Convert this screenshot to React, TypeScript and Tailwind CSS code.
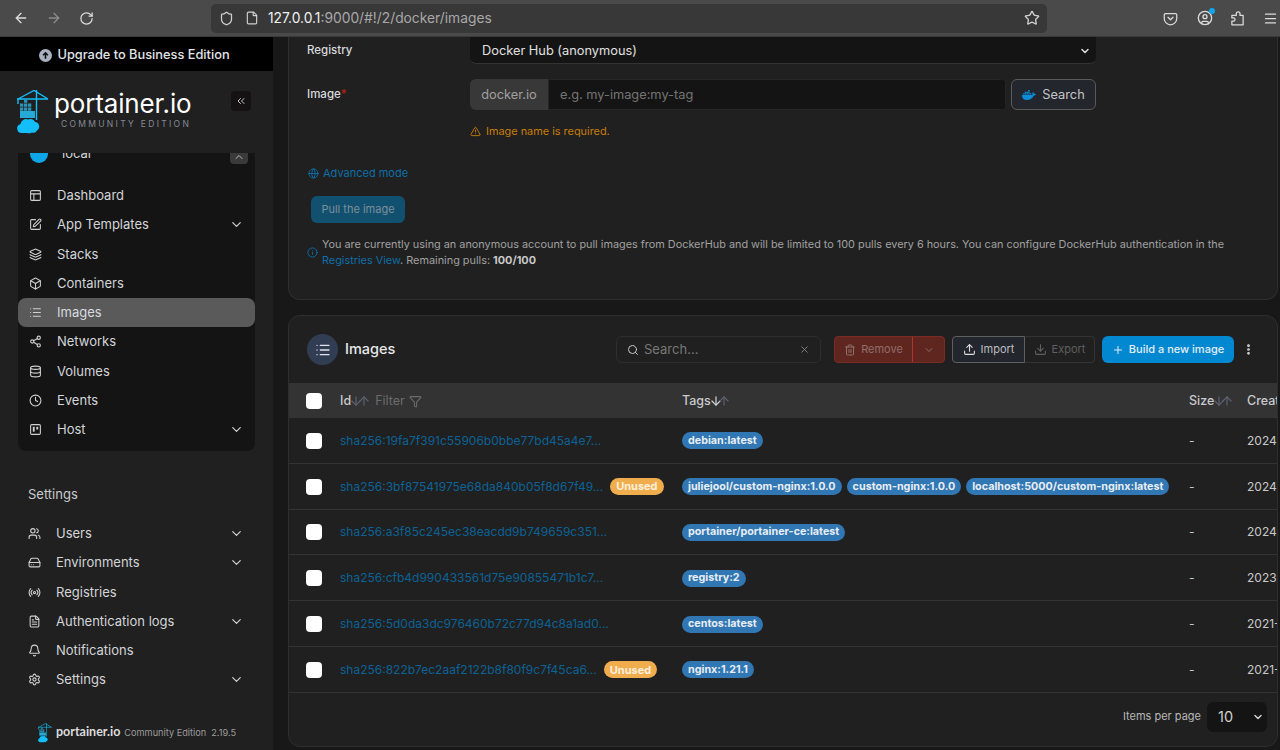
import {
  ArrowDown,
  ArrowLeft,
  ArrowRight,
  ArrowUp,
  Bell,
  Box,
  ChevronDown,
  ChevronUp,
  ChevronsLeft,
  CircleUser,
  Clock,
  Database,
  Download,
  EllipsisVertical,
  File,
  FileText,
  Filter,
  Globe,
  HardDrive,
  Info,
  Layers,
  Layout,
  List,
  Menu,
  Plus,
  Radio,
  RotateCw,
  Search,
  Settings,
  Share2,
  Shield,
  SquarePen,
  Star,
  Trash2,
  TriangleAlert,
  Upload,
  Users,
  X,
} from "lucide-react"
import { FaDocker } from "react-icons/fa"
import type { ComponentType, ReactNode } from "react"

type IconType = ComponentType<{ className?: string; strokeWidth?: number }>

const HostIcon = ({ className }: { className?: string }) => (
  <svg viewBox="0 0 24 24" className={className} fill="none" stroke="currentColor" strokeWidth={2}>
    <rect x="3" y="3" width="18" height="18" rx="2" />
    <rect x="7" y="7" width="3.5" height="9" fill="currentColor" stroke="none" />
    <rect x="13.5" y="7" width="3.5" height="5" fill="currentColor" stroke="none" />
  </svg>
)

const PocketIcon = ({ className }: { className?: string }) => (
  <svg viewBox="0 0 24 24" className={className} fill="none" stroke="currentColor" strokeWidth={2} strokeLinecap="round" strokeLinejoin="round">
    <path d="M4 4h16a2 2 0 0 1 2 2v6a10 10 0 0 1-20 0V6a2 2 0 0 1 2-2z" />
    <path d="m8 10 4 4 4-4" />
  </svg>
)

const ExtensionIcon = ({ className }: { className?: string }) => (
  <svg viewBox="0 0 24 24" className={className} fill="none" stroke="currentColor" strokeWidth={2} strokeLinejoin="round">
    <path d="M3 22v-6h2.500a2.500 2.500 0 0 0 0-5H3V7h7V4.500a3 3 0 0 1 6 0V7h5v15z" />
  </svg>
)

const CraneLogo = ({ className }: { className?: string }) => (
  <svg viewBox="0 0 32 44" className={className} fill="none">
    <path d="M0 9H31M17 0.500L1 9M17 0.500L31 9M1 9V14M19.500 0V30" stroke="#13BEF9" strokeWidth="1.400" />
    <path d="M3 13.500h3.300v3.300H3zM7 13.500h3.300v3.300H7zM11 13.500h3.300v3.300H11zM7 9.500h3.300v3.300H7zM3 17.500h3.300v3.300H3zM7 17.500h3.300v3.300H7zM11 17.500h3.300v3.300H11z" fill="#2a93b8" />
    <rect x="3" y="21" width="15" height="7" fill="#25a9d6" />
    <path d="M5 43a4.600 4.600 0 0 1-1.500-9A5.500 5.500 0 0 1 11 29.500a5 5 0 0 1 7 2.500a4.600 4.600 0 0 1 2 8.500a4 4 0 0 1-5 2a6 6 0 0 1-5 .5z" fill="#13BEF9" />
  </svg>
)

const NavRow = ({
  icon: Icon,
  label,
  chevron,
  active,
  pad = "pl-[11px] pr-[11px]",
}: {
  icon: IconType | typeof HostIcon
  label: string
  chevron?: boolean
  active?: boolean
  pad?: string
}) => (
  <div
    className={`flex h-[29.25px] items-center gap-[15px] rounded-lg ${pad} text-[13px] ${
      active ? "bg-[#5a5a5a] text-[#d8dadf]" : "text-[#d3d5d9]"
    }`}
  >
    <Icon className="size-[13px] shrink-0 text-[#d0d0d0]" />
    <span className="flex-1 leading-none">{label}</span>
    {chevron && <ChevronDown className="size-[15px] text-[#cfcfcf]" />}
  </div>
)

const Tag = ({ children }: { children: ReactNode }) => (
  <span className="flex h-[17px] items-center whitespace-nowrap rounded-full bg-[#3077b4] px-[6px] text-[10.75px] font-bold text-[#e8edf3]">
    {children}
  </span>
)

const Sort = ({ active }: { active?: boolean }) => (
  <span className="-ml-[2px] flex items-center">
    <ArrowDown className={`-mr-[6px] size-[14px] ${active ? "text-[#d5d7dc]" : "text-[#5c6270]"}`} />
    <ArrowUp className="size-[14px] text-[#5c6270]" />
  </span>
)

const rows = [
  { id: "sha256:19fa7f391c55906b0bbe77bd45a4e7...", tags: ["debian:latest"], year: "2024-" },
  {
    id: "sha256:3bf87541975e68da840b05f8d67f49...",
    unused: true,
    tags: ["juliejool/custom-nginx:1.0.0", "custom-nginx:1.0.0", "localhost:5000/custom-nginx:latest"],
    year: "2024-",
  },
  { id: "sha256:a3f85c245ec38eacdd9b749659c351...", tags: ["portainer/portainer-ce:latest"], year: "2024-" },
  { id: "sha256:cfb4d990433561d75e90855471b1c7...", tags: ["registry:2"], year: "2023-" },
  { id: "sha256:5d0da3dc976460b72c77d94c8a1ad0...", tags: ["centos:latest"], year: "2021-" },
  { id: "sha256:822b7ec2aaf2122b8f80f9c7f45ca6...", unused: true, tags: ["nginx:1.21.1"], year: "2021-" },
]

const cols = "grid grid-cols-[51px_342px_507px_58px_31px] items-center"

const Checkbox = () => (
  <input type="checkbox" className="ml-[17px] size-4 appearance-none rounded-[4px] bg-white" />
)

const BrowserBar = () => (
  <div className="flex h-[37px] shrink-0 items-center border-b border-[#3a3a3a] bg-[#4a4a4a] text-[#dcdcdc]">
    <div className="flex w-[211px] items-center pl-[13px]">
      <ArrowLeft className="size-[16px]" />
      <ArrowRight className="ml-[17px] size-[16px] text-[#8c8c8c]" />
      <RotateCw className="ml-[17px] size-[15px]" />
    </div>
    <div className="flex h-[29px] w-[836px] items-center rounded-[5px] bg-[#383838] pl-[8px] pr-[7px]">
      <Shield className="size-[15px] text-[#d0d0d0]" />
      <File className="ml-[11px] size-[14px] text-[#d0d0d0]" />
      <span className="ml-[9px] flex-1 pt-[1px] text-[13.8px] text-[#a8a8a8]">
        <span className="text-[#f0f0f0]">127.0.0.1</span>:9000/#!/2/docker/images
      </span>
      <Star className="size-[16px] text-[#d0d0d0]" />
    </div>
    <div className="ml-[116px] flex items-center">
      <PocketIcon className="size-[15px]" />
      <span className="relative ml-[19px]">
        <CircleUser className="size-[16px]" />
        <span className="absolute -right-[2px] -top-[2px] size-[6px] rounded-full bg-[#0ea5e9]" />
      </span>
      <ExtensionIcon className="ml-[17px] size-[15px]" />
      <Menu className="ml-[18px] size-[15px]" />
    </div>
  </div>
)

const Sidebar = () => (
  <aside className="flex w-[273px] shrink-0 flex-col overflow-hidden bg-[#202020]">
    <div className="flex h-[34px] shrink-0 items-center justify-center bg-black pr-[4px] pt-[2px] text-[12.8px] font-medium text-[#e2e4e8]">
      <svg viewBox="0 0 24 24" className="mr-[5px] size-[13px]">
        <circle cx="12" cy="12" r="12" fill="#a9b1c0" />
        <path d="M12 18V7M7.500 11.500 12 7l4.500 4.500" stroke="#111" strokeWidth="3" fill="none" />
      </svg>
      Upgrade to Business Edition
    </div>
    <div className="relative flex h-[82px] shrink-0 pl-[17px] pt-[19px]">
      <CraneLogo className="h-[44px] w-[32px]" />
      <div className="ml-[5px] -mt-[1px]">
        <div className="text-[26px] leading-[30px] tracking-[-0.15px] text-white">portainer.io</div>
        <div className="ml-[7px] whitespace-nowrap text-[8.500px] leading-[10px] tracking-[0.27em] text-[#848a96]">
          COMMUNITY EDITION
        </div>
      </div>
      <div className="absolute left-[231px] top-[20px] flex size-[20px] items-center justify-center rounded bg-[#141212]">
        <ChevronsLeft className="size-[12px] text-[#c8c8c8]" />
      </div>
    </div>
    <div className="mx-[18px] h-[298px] shrink-0 overflow-hidden rounded-b-lg bg-[#141414]">
      <div className="-mt-[9px] flex h-[20px] items-center pl-[12px] pr-[7px]">
        <span className="size-[18px] rounded-full bg-[#0ea5e9]" />
        <span className="ml-[14px] flex-1 text-[13px] text-[#d3d5d9]">local</span>
        <span className="flex h-[20px] w-[18px] items-center justify-center rounded bg-[#3a3a3a]">
          <ChevronUp className="mt-[6px] size-[12px] text-[#bbb]" />
        </span>
      </div>
      <div className="mt-[17px]">
        <NavRow icon={Layout} label="Dashboard" />
        <NavRow icon={SquarePen} label="App Templates" chevron />
        <NavRow icon={Layers} label="Stacks" />
        <NavRow icon={Box} label="Containers" />
        <NavRow icon={List} label="Images" active />
        <NavRow icon={Share2} label="Networks" />
        <NavRow icon={Database} label="Volumes" />
        <NavRow icon={Clock} label="Events" />
        <NavRow icon={HostIcon} label="Host" chevron />
      </div>
    </div>
    <div className="ml-[28px] mt-[34px] text-[13px] leading-[18px] text-[#c9cbcf]">Settings</div>
    <div className="mt-[16px] px-[18px]">
      <NavRow icon={Users} label="Users" chevron pad="pl-[10px] pr-[11px]" />
      <NavRow icon={HardDrive} label="Environments" chevron pad="pl-[10px] pr-[11px]" />
      <NavRow icon={Radio} label="Registries" pad="pl-[10px] pr-[11px]" />
      <NavRow icon={FileText} label="Authentication logs" chevron pad="pl-[10px] pr-[11px]" />
      <NavRow icon={Bell} label="Notifications" pad="pl-[10px] pr-[11px]" />
      <NavRow icon={Settings} label="Settings" chevron pad="pl-[10px] pr-[11px]" />
    </div>
    <div className="ml-[38px] mt-[28px] flex items-center">
      <CraneLogo className="h-[20px] w-[14px]" />
      <span className="ml-[4px] text-[12.500px] font-bold text-[#dcdcdc] [font-family:Lato,sans-serif]">portainer.io</span>
      <span className="ml-[4px] text-[9.200px] text-[#9c9c9c]">Community Edition</span>
      <span className="ml-[5px] text-[9.200px] text-[#9c9c9c]">2.19.5</span>
    </div>
  </aside>
)

const PullCard = () => (
  <section className="h-[263px] w-[990px] shrink-0 rounded-b-xl border-x border-b border-[#2e2e2e] bg-[#202020]">
    <div className="flex h-[27px] items-center pl-[18px]">
      <span className="w-[163px] text-[11.500px] font-medium text-[#d8dade]">Registry</span>
      <div className="flex h-[27px] w-[626px] items-center justify-between rounded-b-md border-b border-[#333] bg-[#141414] pl-[12px] pr-[5px] pt-[1px] text-[12.800px] text-[#e0e0e0]">
        Docker Hub (anonymous)
        <ChevronDown className="size-[12px] text-[#ddd]" strokeWidth={3} />
      </div>
    </div>
    <div className="mt-[15px] flex h-[31px] pl-[18px]">
      <span className="w-[163px] pt-[7px] text-[11.500px] font-medium text-[#d8dade]">
        Image<span className="text-[#b42318]">*</span>
      </span>
      <div className="flex h-[31px] w-[536px] overflow-hidden rounded-md">
        <span className="flex w-[78px] items-center justify-center bg-[#383838] text-[12.800px] text-[#a0a0a0]">docker.io</span>
        <input
          placeholder="e.g. my-image:my-tag"
          className="flex-1 border border-[#262626] bg-[#141414] pl-[11px] text-[12.800px] outline-none placeholder:text-[#747474]"
        />
      </div>
      <button className="ml-[5px] flex h-[31px] w-[85px] items-center justify-center gap-[6px] rounded-md border border-[#5a5a5a] bg-[#23262d] text-[12.800px] text-[#c4c4c4]">
        <FaDocker className="size-[14px] text-[#0a8ed9]" />
        Search
      </button>
    </div>
    <div className="ml-[181px] mt-[14px] flex h-[14px] items-center gap-[5px] text-[10.900px] text-[#c77d0a]">
      <TriangleAlert className="size-[11px]" />
      Image name is required.
    </div>
    <div className="ml-[19px] mt-[28px] flex h-[14px] items-center gap-[4px] text-[11px] text-[#0d6fa8]">
      <Globe className="size-[11px]" />
      Advanced mode
    </div>
    <button className="ml-[22px] mt-[16px] flex h-[27px] w-[94px] items-center justify-center rounded-md bg-[#11506f] text-[11px] text-[#7b8f9a]">
      Pull the image
    </button>
    <div className="ml-[18px] mt-[13px] flex items-center gap-[4px]">
      <Info className="size-[11px] shrink-0 text-[#0d6fa8]" />
      <p className="w-[930px] text-[10.870px] leading-[16px] text-[#a0a0a0]">
        You are currently using an anonymous account to pull images from DockerHub and will be limited to 100 pulls every 6 hours. You can configure DockerHub authentication in the{" "}
        <span className="text-[#0d6fa8]">Registries View</span>. Remaining pulls: <b className="text-[#c8c8c8]">100/100</b>
      </p>
    </div>
  </section>
)

const ImagesCard = () => (
  <section className="mt-[15px] h-[432px] w-[990px] shrink-0 overflow-hidden rounded-xl border border-[#2e2e2e] bg-[#202020]">
    <div className="flex h-[67px] items-center pl-[18px]">
      <span className="flex size-[31px] items-center justify-center rounded-full bg-[#303d52]">
        <List className="size-[16px] text-[#e0e4ea]" />
      </span>
      <span className="ml-[7px] w-[271px] pb-[2px] text-[14.500px] font-medium text-[#e6e7e9]">Images</span>
      <div className="flex h-[27px] w-[205px] items-center rounded-md border border-[#2e2e2e] pl-[10px] pr-[10px] text-[13px] text-[#777]">
        <Search className="size-[12px] text-[#c8c8c8]" />
        <span className="ml-[5px] flex-1">Search...</span>
        <X className="size-[11px] text-[#888]" />
      </div>
      <div className="ml-[13px] flex h-[27px] w-[111px] rounded-sm border border-[#7c2a24] bg-[#5f2620] text-[#8f6f6a]">
        <span className="flex w-[78px] items-center justify-center gap-[5px] border-r border-[#b3322a] text-[11px]">
          <Trash2 className="size-[12px]" />
          Remove
        </span>
        <span className="flex flex-1 items-center justify-center">
          <ChevronDown className="size-[12px]" />
        </span>
      </div>
      <div className="ml-[7px] flex h-[27px] text-[11px]">
        <span className="flex w-[73px] items-center justify-center gap-[5px] rounded-l-sm border border-[#5f5f5f] bg-[#23262d] text-[#bdbdbd]">
          <Upload className="size-[13px] text-[#ddd]" />
          Import
        </span>
        <span className="flex w-[70px] items-center justify-center gap-[5px] rounded-r-sm border-y border-r border-[#333] text-[#5f5f5f]">
          <Download className="size-[13px]" />
          Export
        </span>
      </div>
      <button className="ml-[7px] flex h-[27px] w-[132px] items-center justify-center gap-[5px] rounded-md bg-[#0288d1] text-[11px] font-medium text-[#e4eef5]">
        <Plus className="size-[12px]" />
        Build a new image
      </button>
      <EllipsisVertical className="ml-[8px] size-[13px] text-[#e0e0e0]" strokeWidth={3} />
    </div>
    <div className={`${cols} h-[35px] bg-[#333333] pt-[1px] text-[12.500px] font-medium text-[#c8c9cc]`}>
      <Checkbox />
      <div className="flex items-center">
        Id
        <Sort />
        <span className="ml-[4px] font-normal text-[#6b6b6b]">Filter</span>
        <Filter className="ml-[4px] size-[13px] text-[#6b6b6b]" />
      </div>
      <div className="flex items-center">
        Tags
        <Sort active />
      </div>
      <div className="flex items-center">
        Size
        <Sort />
      </div>
      <div className="overflow-hidden whitespace-nowrap">Created</div>
    </div>
    {rows.map((r) => (
      <div key={r.id} className={`${cols} h-[45.8px] border-b border-[#333333] pt-[1px] text-[12px]`}>
        <Checkbox />
        <div className="flex items-center">
          <span className="text-[#0c6296]">{r.id}</span>
          {r.unused && (
            <span className="ml-[7px] flex h-[17px] items-center rounded-full bg-[#f0ad4e] px-[6px] text-[11px] font-bold text-[#fdf0dc]">
              Unused
            </span>
          )}
        </div>
        <div className="flex gap-[5px]">
          {r.tags.map((t) => (
            <Tag key={t}>{t}</Tag>
          ))}
        </div>
        <div className="text-[#c8c8c8]">-</div>
        <div className="overflow-hidden whitespace-nowrap text-[#c8c8c8]">{r.year}</div>
      </div>
    ))}
    <div className="flex h-[54px] items-center justify-end pb-[5px] pr-[10px] text-[11px] text-[#b8b8b8]">
      <span className="mb-[3px]">Items per page</span>
      <div className="ml-[6px] flex h-[30px] w-[60px] items-center justify-between rounded-md bg-[#141414] pl-[11px] pr-[3px] text-[14.500px] text-[#d0d0d0]">
        10
        <ChevronDown className="size-[12px]" strokeWidth={3} />
      </div>
    </div>
  </section>
)

export default function App() {
  return (
    <div className="flex h-[750px] w-[1280px] flex-col overflow-hidden bg-[#181818] [font-family:Inter,sans-serif]">
      <BrowserBar />
      <div className="flex flex-1 overflow-hidden">
        <Sidebar />
        <main className="ml-[15px] flex flex-col">
          <PullCard />
          <ImagesCard />
        </main>
      </div>
    </div>
  )
}
